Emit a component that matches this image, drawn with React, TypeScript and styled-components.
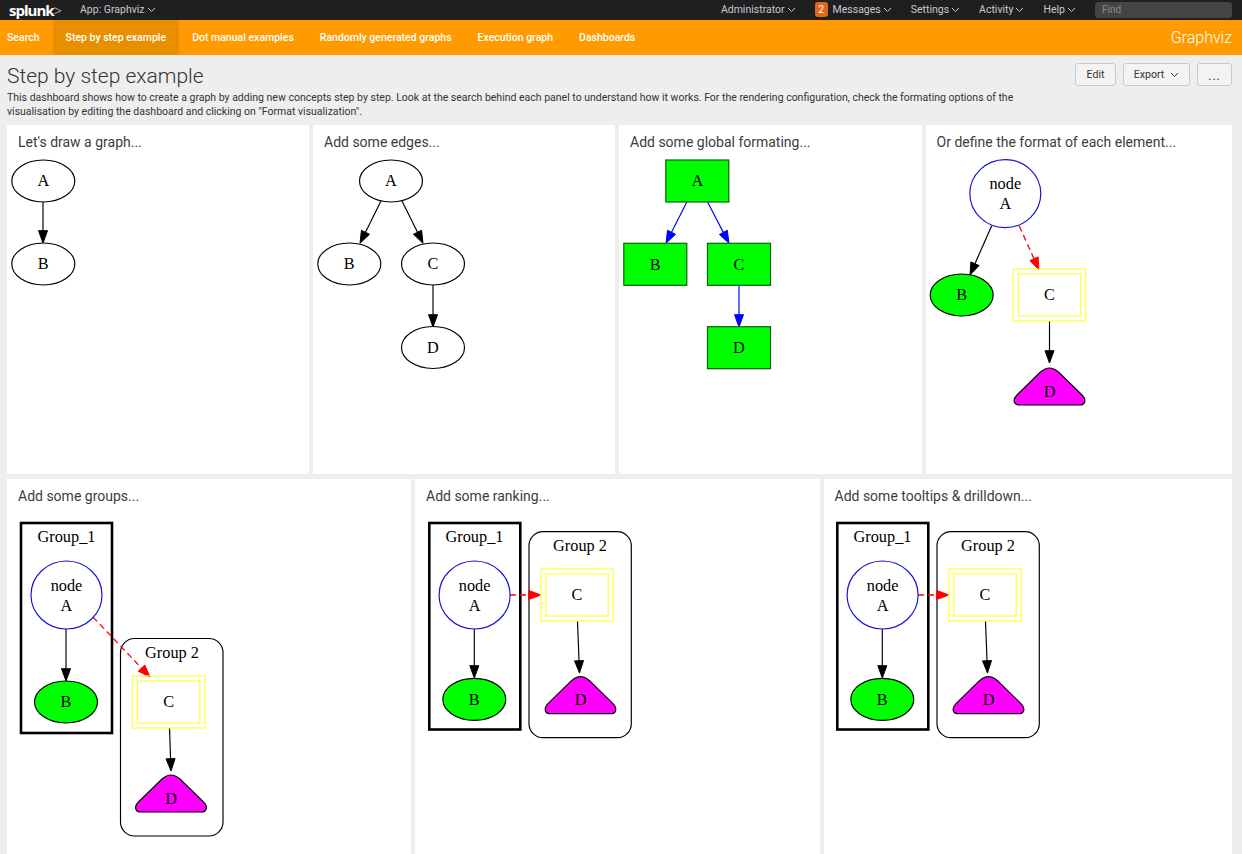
import React from "react";
import styled, { createGlobalStyle } from "styled-components";

const Global = createGlobalStyle`
  html, body { margin: 0; padding: 0; background: #eeeeee; }
  body { font-family: Roboto, "Liberation Sans", sans-serif; overflow: hidden; }
`;

const Page = styled.div`
  width: 1242px;
  height: 854px;
  overflow: hidden;
`;

const TopBar = styled.header`
  height: 20px;
  box-sizing: border-box;
  padding: 0 10px 1px 9px;
  background: #1f1f1f;
  display: flex;
  align-items: center;
  color: #c3cbd4;
  font-size: 10.5px;
`;

const Logo = styled.div`
  font-family: "Open Sans", sans-serif;
  font-weight: 700;
  font-size: 15px;
  letter-spacing: -1px;
  color: #ffffff;
  width: 71px;
  line-height: 18px;
  span { color: #9a9a9a; font-weight: 400; }
`;

const MenuItem = styled.div<{ $gap?: number }>`
  display: flex;
  align-items: center;
  gap: 2px;
  margin-right: ${(p) => p.$gap ?? 19}px;
  white-space: nowrap;
`;

const Spacer = styled.div`
  flex: 1;
`;

const Badge = styled.span`
  background: #e0651d;
  color: #ffffff;
  border-radius: 3px;
  width: 13px;
  height: 15px;
  line-height: 15px;
  text-align: center;
  font-size: 10.5px;
  margin-right: 3px;
`;

const FindBox = styled.div`
  width: 130px;
  height: 16px;
  line-height: 16px;
  padding-left: 7px;
  background: #444444;
  border-radius: 3px;
  color: #8c8c8c;
  font-size: 10px;
`;

const NavBar = styled.nav`
  height: 35px;
  background: #ff9b00;
  display: flex;
  align-items: stretch;
  padding-right: 10px;
`;

const NavTab = styled.div<{ $active?: boolean }>`
  display: flex;
  align-items: center;
  padding: 0 13px 0 13px;
  color: #ffffff;
  font-size: 10.5px;
  font-weight: 500;
  white-space: nowrap;
  background: ${(p) => (p.$active ? "#e88f00" : "transparent")};
  &:first-child { padding-left: 7px; }
`;

const AppTitle = styled.div`
  margin-left: auto;
  align-self: center;
  color: #ffffff;
  font-size: 16px;
  font-weight: 300;
`;

const Intro = styled.section`
  height: 70px;
  position: relative;
  padding: 9px 0 0 7px;
  box-sizing: border-box;
`;

const PageTitle = styled.h1`
  margin: 0;
  font-size: 21px;
  line-height: 24px;
  font-weight: 300;
  color: #333333;
`;

const Description = styled.p`
  margin: 3px 0 0;
  width: 1020px;
  font-size: 10.5px;
  line-height: 14px;
  color: #333333;
`;

const Actions = styled.div`
  position: absolute;
  top: 8px;
  right: 10px;
  display: flex;
  gap: 7px;
`;

const Btn = styled.div<{ $w: number }>`
  width: ${(p) => p.$w}px;
  height: 23px;
  box-sizing: border-box;
  border: 1px solid #c9c9c9;
  border-radius: 3px;
  background: #f3f3f3;
  color: #333333;
  font-size: 10.5px;
  display: flex;
  align-items: center;
  justify-content: center;
  gap: 6px;
`;

const Dots = styled.span`
  font-size: 12px;
  letter-spacing: 1px;
  margin-top: 3px;
`;

const Row = styled.div<{ $cols: string; $h: number }>`
  display: grid;
  grid-template-columns: ${(p) => p.$cols};
  column-gap: 4px;
  height: ${(p) => p.$h}px;
  padding-left: 7px;
  margin-bottom: 5px;
`;

const Panel = styled.article`
  background: #ffffff;
  display: flex;
  flex-direction: column;
  overflow: hidden;
`;

const PanelTitle = styled.h2`
  margin: 0;
  height: 30px;
  line-height: 34px;
  padding-left: 11px;
  font-size: 14px;
  font-weight: 400;
  color: #3c3c3c;
  white-space: nowrap;
  flex: none;
`;

const Canvas = styled.svg<{ $shift?: number }>`
  display: block;
  flex: 1;
  width: 100%;
  margin-left: ${(p) => p.$shift ?? 0}px;
  overflow: visible;
`;

const Label = styled.text`
  font-family: "Liberation Serif", "Times New Roman", serif;
  font-size: 16.3px;
  text-anchor: middle;
  fill: #000000;
`;

const Shape = styled.ellipse<{ $fill?: string; $stroke?: string }>`
  fill: ${(p) => p.$fill ?? "#ffffff"};
  stroke: ${(p) => p.$stroke ?? "#000000"};
  stroke-width: 1.17;
`;

const Box = styled.rect<{ $fill?: string; $stroke?: string; $w?: number }>`
  fill: ${(p) => p.$fill ?? "none"};
  stroke: ${(p) => p.$stroke ?? "#000000"};
  stroke-width: ${(p) => p.$w ?? 1.17};
`;

const TriPath = styled.path`
  fill: #ff00ff;
  stroke: #000000;
  stroke-width: 1.17;
`;

const EdgeLine = styled.line<{ $color: string; $dashed?: boolean }>`
  stroke: ${(p) => p.$color};
  stroke-width: ${(p) => (p.$dashed ? 1.3 : 1.17)};
  stroke-dasharray: ${(p) => (p.$dashed ? "6 4" : "none")};
`;

const EdgeHead = styled.polygon<{ $color: string }>`
  fill: ${(p) => p.$color};
  stroke: ${(p) => p.$color};
  stroke-width: 1;
`;

type EdgeProps = { x1: number; y1: number; x2: number; y2: number; color?: string; dashed?: boolean };

function Edge({ x1, y1, x2, y2, color = "#000000", dashed }: EdgeProps) {
  const len = Math.hypot(x2 - x1, y2 - y1);
  const ux = (x2 - x1) / len;
  const uy = (y2 - y1) / len;
  const bx = x2 - ux * 12.3;
  const by = y2 - uy * 12.3;
  const px = -uy * 4.5;
  const py = ux * 4.5;
  return (
    <g>
      <EdgeLine x1={x1} y1={y1} x2={bx} y2={by} $color={color} $dashed={dashed} />
      <EdgeHead points={`${x2},${y2} ${bx + px},${by + py} ${bx - px},${by - py}`} $color={color} />
    </g>
  );
}

function Oval({ cx, cy, text, fill }: { cx: number; cy: number; text: string; fill?: string }) {
  return (
    <g>
      <Shape cx={cx} cy={cy} rx={31.5} ry={21} $fill={fill} />
      <Label x={cx} y={cy + 5.3}>{text}</Label>
    </g>
  );
}

function Square({ cx, cy, text }: { cx: number; cy: number; text: string }) {
  return (
    <g>
      <Box x={cx - 31.5} y={cy - 21} width={63} height={42} $fill="#00ff00" $stroke="#056005" />
      <Label x={cx} y={cy + 5.3}>{text}</Label>
    </g>
  );
}

function NodeA({ cx, cy }: { cx: number; cy: number }) {
  return (
    <g>
      <Shape cx={cx} cy={cy} rx={35.5} ry={34} $stroke="#1414d0" />
      <Label x={cx} y={cy - 4.3}>node</Label>
      <Label x={cx} y={cy + 15.6}>A</Label>
    </g>
  );
}

function DoubleC({ cx, cy }: { cx: number; cy: number }) {
  return (
    <g>
      <Box x={cx - 36.2} y={cy - 26} width={72.4} height={52} $stroke="#ffff33" />
      <Box x={cx - 31.2} y={cy - 21} width={62.4} height={42} $stroke="#ffff33" />
      <Label x={cx} y={cy + 5.3}>C</Label>
    </g>
  );
}

function Triangle({ cx, top }: { cx: number; top: number }) {
  return (
    <g transform={`translate(${cx} ${top})`}>
      <TriPath d="M-9 4 Q-4 0 0 0 Q4 0 9 4 L32.5 27 Q36.5 31 35 34.5 Q34 37 30 37 L-30 37 Q-34 37 -35 34.5 Q-36.5 31 -32.5 27 Z" />
      <Label x={0} y={28.7}>D</Label>
    </g>
  );
}

function GraphOne() {
  return (
    <Canvas>
      <Edge x1={36} y1={47} x2={36} y2={88} />
      <Oval cx={36.3} cy={26} text="A" />
      <Oval cx={36.3} cy={109} text="B" />
    </Canvas>
  );
}

function GraphTwo() {
  return (
    <Canvas>
      <Edge x1={68} y1={46} x2={47} y2={88.3} />
      <Edge x1={89} y1={46} x2={110} y2={88.3} />
      <Edge x1={120} y1={130} x2={120} y2={172} />
      <Oval cx={78} cy={26} text="A" />
      <Oval cx={36.3} cy={109} text="B" />
      <Oval cx={120} cy={109} text="C" />
      <Oval cx={120} cy={192.5} text="D" />
    </Canvas>
  );
}

function GraphThree() {
  return (
    <Canvas>
      <Edge x1={67.7} y1={47.3} x2={47} y2={88.3} color="#0000ff" />
      <Edge x1={88.7} y1={47.3} x2={110} y2={88.3} color="#0000ff" />
      <Edge x1={120} y1={130} x2={120} y2={172} color="#0000ff" />
      <Square cx={78.3} cy={26} text="A" />
      <Square cx={36.3} cy={109.3} text="B" />
      <Square cx={120} cy={109.3} text="C" />
      <Square cx={120} cy={192.7} text="D" />
    </Canvas>
  );
}

function GraphFour() {
  return (
    <Canvas $shift={0.4}>
      <Edge x1={65.7} y1={70.7} x2={44} y2={120} />
      <Edge x1={93.3} y1={71} x2={113} y2={115} color="#ff0000" dashed />
      <Edge x1={123.5} y1={166} x2={123.5} y2={208} />
      <NodeA cx={79.3} cy={38.6} />
      <Oval cx={35.7} cy={140} text="B" fill="#00ff00" />
      <DoubleC cx={123.5} cy={140} />
      <Triangle cx={123.5} top={213} />
    </Canvas>
  );
}

function GraphGroups() {
  return (
    <Canvas>
      <Box x={14} y={14} width={91} height={210} $w={2.6} />
      <Box x={113.5} y={129.5} width={102.5} height={197.5} rx={14} />
      <Label x={59.5} y={33}>Group_1</Label>
      <Label x={165} y={149}>Group 2</Label>
      <Edge x1={59} y1={120} x2={59} y2={172} />
      <Edge x1={86} y1={108} x2={143} y2={168} color="#ff0000" dashed />
      <Edge x1={162.5} y1={219} x2={164} y2={262} />
      <NodeA cx={59.5} cy={86} />
      <Oval cx={59} cy={193} text="B" fill="#00ff00" />
      <DoubleC cx={161.6} cy={193} />
      <Triangle cx={164} top={266} />
    </Canvas>
  );
}

function GraphRanked({ shift }: { shift?: number }) {
  return (
    <Canvas $shift={shift}>
      <Box x={14.3} y={14} width={91} height={206.5} $w={2.6} />
      <Box x={114} y={22.7} width={102.3} height={206} rx={14} />
      <Label x={59.5} y={33}>Group_1</Label>
      <Label x={165} y={42}>Group 2</Label>
      <Edge x1={59.3} y1={120} x2={59.3} y2={169} />
      <Edge x1={95} y1={86} x2={126} y2={86} color="#ff0000" dashed />
      <Edge x1={162.5} y1={112} x2={164.5} y2={164} />
      <NodeA cx={59.6} cy={86} />
      <Oval cx={59.3} cy={190.3} text="B" fill="#00ff00" />
      <DoubleC cx={162} cy={86} />
      <Triangle cx={165.5} top={167.7} />
    </Canvas>
  );
}

function Chevron({ color = "currentColor" }: { color?: string }) {
  return (
    <svg width="9" height="6" viewBox="0 0 9 6" fill="none">
      <path d="M1 1 L4.5 4.5 L8 1" stroke={color} strokeWidth="1" />
    </svg>
  );
}

export default function App() {
  return (
    <Page>
      <Global />
      <TopBar>
        <Logo>splunk<span>&gt;</span></Logo>
        <MenuItem>App: Graphviz <Chevron /></MenuItem>
        <Spacer />
        <MenuItem>Administrator <Chevron /></MenuItem>
        <MenuItem><Badge>2</Badge>Messages <Chevron /></MenuItem>
        <MenuItem>Settings <Chevron /></MenuItem>
        <MenuItem>Activity <Chevron /></MenuItem>
        <MenuItem>Help <Chevron /></MenuItem>
        <FindBox>Find</FindBox>
      </TopBar>
      <NavBar>
        <NavTab>Search</NavTab>
        <NavTab $active>Step by step example</NavTab>
        <NavTab>Dot manual examples</NavTab>
        <NavTab>Randomly generated graphs</NavTab>
        <NavTab>Execution graph</NavTab>
        <NavTab>Dashboards</NavTab>
        <AppTitle>Graphviz</AppTitle>
      </NavBar>
      <Intro>
        <PageTitle>Step by step example</PageTitle>
        <Description>
          This dashboard shows how to create a graph by adding new concepts step by step. Look at the search behind each panel to understand how it works. For the rendering configuration, check the formating options of the visualisation by editing the dashboard and clicking on "Format visualization".
        </Description>
        <Actions>
          <Btn $w={41}>Edit</Btn>
          <Btn $w={67}>Export <Chevron /></Btn>
          <Btn $w={35}><Dots>...</Dots></Btn>
        </Actions>
      </Intro>
      <Row $cols="302px 302px 302.6px 306.4px" $h={349}>
        <Panel><PanelTitle>Let's draw a graph...</PanelTitle><GraphOne /></Panel>
        <Panel><PanelTitle>Add some edges...</PanelTitle><GraphTwo /></Panel>
        <Panel><PanelTitle>Add some global formating...</PanelTitle><GraphThree /></Panel>
        <Panel><PanelTitle>Or define the format of each element...</PanelTitle><GraphFour /></Panel>
      </Row>
      <Row $cols="404px 404.5px 408.5px" $h={375}>
        <Panel><PanelTitle>Add some groups...</PanelTitle><GraphGroups /></Panel>
        <Panel><PanelTitle>Add some ranking...</PanelTitle><GraphRanked /></Panel>
        <Panel><PanelTitle>Add some tooltips &amp; drilldown...</PanelTitle><GraphRanked shift={-0.5} /></Panel>
      </Row>
    </Page>
  );
}
